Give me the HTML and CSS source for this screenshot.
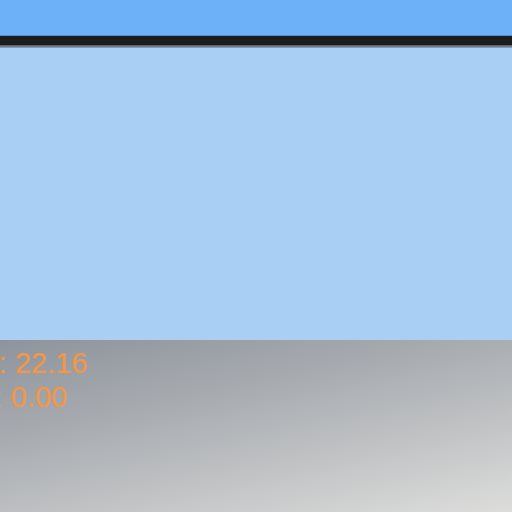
FILE: index.html
```html
<!DOCTYPE html>
<html>
<head>
<meta charset="utf-8">
<link rel="stylesheet" href="styles.css">
</head>
<body>
<div class="app">
  <header class="topbar"></header>
  <div class="toolbar"></div>
  <div class="shade"></div>
  <main class="panel"></main>
  <section class="stage">
    <div class="readout">
      <div class="line line-a">Alt: 22.16</div>
      <div class="line line-b">Spd: 0.00</div>
    </div>
  </section>
</div>
</body>
</html>
```
FILE: styles.css
```css
html, body {
  margin: 0;
  padding: 0;
  width: 512px;
  height: 512px;
  overflow: hidden;
}
.app {
  display: flex;
  flex-direction: column;
  width: 512px;
  height: 512px;
}
.topbar {
  height: 35px;
  background: #6db2f9;
  border-bottom: 1px solid #4f8dd0;
  flex: none;
}
.toolbar {
  height: 9px;
  background: #1c1c1c;
  flex: none;
}
.shade {
  height: 3px;
  background: linear-gradient(#4d5560, #8fa6c0);
  flex: none;
}
.panel {
  height: 291px;
  background: #aacff5;
  border-bottom: 1px solid #b4cde6;
  flex: none;
}
.stage {
  flex: 1;
  background: linear-gradient(168deg, #8e949d 0%, #a7abb0 35%, #bfc1c3 65%, #dcdddb 100%);
  overflow: hidden;
  padding-top: 6px;
}
.readout {
  font-family: "Liberation Sans", Arial, sans-serif;
  font-size: 29px;
  line-height: 34px;
  color: #ef984a;
  white-space: nowrap;
  text-shadow: 0 0 1px rgba(239,152,74,0.6);
}
.line-a {
  margin-left: -35px;
}
.line-b {
  margin-left: -57px;
}
```
